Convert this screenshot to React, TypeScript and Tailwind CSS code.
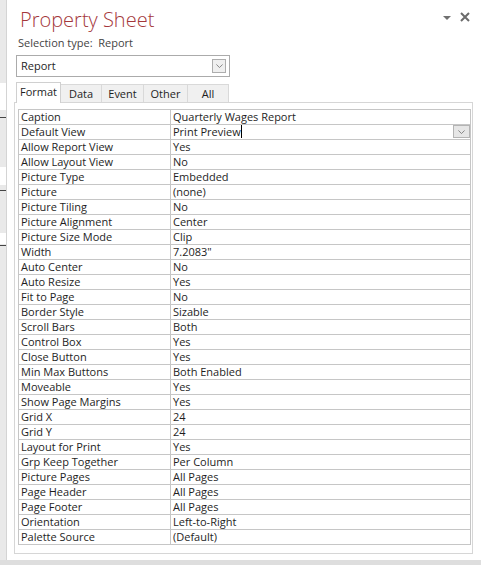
import React from "react";

const rows: [string, string][] = [
  ["Caption", "Quarterly Wages Report"],
  ["Default View", "Print Preview"],
  ["Allow Report View", "Yes"],
  ["Allow Layout View", "No"],
  ["Picture Type", "Embedded"],
  ["Picture", "(none)"],
  ["Picture Tiling", "No"],
  ["Picture Alignment", "Center"],
  ["Picture Size Mode", "Clip"],
  ["Width", "7.2083\""],
  ["Auto Center", "No"],
  ["Auto Resize", "Yes"],
  ["Fit to Page", "No"],
  ["Border Style", "Sizable"],
  ["Scroll Bars", "Both"],
  ["Control Box", "Yes"],
  ["Close Button", "Yes"],
  ["Min Max Buttons", "Both Enabled"],
  ["Moveable", "Yes"],
  ["Show Page Margins", "Yes"],
  ["Grid X", "24"],
  ["Grid Y", "24"],
  ["Layout for Print", "Yes"],
  ["Grp Keep Together", "Per Column"],
  ["Picture Pages", "All Pages"],
  ["Page Header", "All Pages"],
  ["Page Footer", "All Pages"],
  ["Orientation", "Left-to-Right"],
  ["Palette Source", "(Default)"],
];

const Chevron = ({ w = 9, h = 5 }: { w?: number; h?: number }) => (
  <svg width={w} height={h} viewBox="0 0 9 5">
    <path d="M0.5 0.5 L4.5 4.5 L8.5 0.5" fill="none" stroke="#6a6a6a" strokeWidth="1" />
  </svg>
);

export default function App() {
  const font = { fontFamily: '"Open Sans", "Noto Sans", sans-serif' };
  return (
    <div className="w-[481px] h-[565px] flex flex-col bg-white overflow-hidden" style={font}>
      <div className="flex h-[560px]">
        {/* underlying window strip */}
        <div className="w-[7px] flex flex-col bg-[#e9e9e9] border-r border-[#d4d4d4]">
          <div className="h-[83px]" />
          <div className="h-[27px] bg-white" />
          <div className="h-[7px]" />
          <div className="h-[1px] bg-[#444]" />
          <div className="h-[49px]" />
          <div className="h-[18px] bg-white" />
          <div className="h-[5px]" />
          <div className="h-[1px] bg-[#444]" />
          <div className="h-[42px]" />
          <div className="h-[11px] bg-white" />
          <div className="h-[1px]" />
          <div className="h-[1px] bg-[#444]" />
        </div>
        <div className="flex-1 flex flex-col bg-white">
          <div className="flex justify-between h-[34px]">
            <div className="ml-[13px] mt-[6px] text-[20px] leading-[28px] font-light text-[#a4373a]">
              Property Sheet
            </div>
            <div className="flex items-start gap-[9px] pr-[11px] mt-[12px]">
              <svg width="8" height="4" viewBox="0 0 8 4" className="mt-[4px]">
                <path d="M0 0 H8 L4 4 Z" fill="#707070" />
              </svg>
              <svg width="10" height="10" viewBox="0 0 10 10">
                <path d="M1 1 L9 9 M9 1 L1 9" stroke="#6b6b6b" strokeWidth="2" />
              </svg>
            </div>
          </div>
          <div className="ml-[11px] h-[17px] leading-[17px] text-[11px] text-[#444]">
            Selection type:&nbsp;&nbsp;Report
          </div>
          <div className="ml-[9px] mt-[4px] w-[214px] h-[22px] border border-[#ababab] flex items-center justify-between pl-[4px] pr-[3px] text-[11px] text-[#1e1e1e]">
            <span>Report</span>
            <div className="w-[14px] h-[14px] border border-[#adadad] bg-[#efefef] flex items-center justify-center">
              <Chevron w={7} h={4} />
            </div>
          </div>
          <div className="ml-[9px] mt-[5px] h-[20px] flex items-end text-[11px] text-[#1e1e1e]">
            <div className="w-[45px] h-[21px] mb-[-1px] relative z-10 bg-white border border-b-0 border-[#d0d0d0] flex items-center justify-center pb-[1px]">
              Format
            </div>
            {[
              ["Data", 41],
              ["Event", 42],
              ["Other", 44],
              ["All", 41],
            ].map(([t, w]) => (
              <div
                key={t as string}
                className="h-[18px] bg-[#f0f0f0] border-t border-r border-[#d9d9d9] flex items-center justify-center pt-[1px]"
                style={{ width: w as number }}
              >
                {t}
              </div>
            ))}
          </div>
          <div className="ml-[7px] w-[459px] h-[452px] border border-[#d6d6d6] pt-[6px] pl-[3px]">
            <div className="w-[453px] border-t border-l border-r border-[#c6c6c6] text-[11px] leading-[14px] text-[#1e1e1e]">
              {rows.map(([k, v], i) => (
                <div key={k} className="flex h-[15px] border-b border-[#c6c6c6]">
                  <div className="w-[152px] border-r border-[#c6c6c6] pl-[2px] whitespace-nowrap">{k}</div>
                  <div className="flex-1 pl-[2px] whitespace-nowrap flex justify-between">
                    {i === 1 ? (
                      <>
                        <span className="flex items-start">
                          {v}
                          <span className="inline-block w-[1px] h-[13px] bg-black" />
                        </span>
                        <div className="w-[17px] h-[13px] border border-[#b4b4b4] bg-[#e6e6e6] flex items-center justify-center">
                          <Chevron w={7} h={4} />
                        </div>
                      </>
                    ) : (
                      <span>{v}</span>
                    )}
                  </div>
                </div>
              ))}
            </div>
          </div>
        </div>
      </div>
      <div className="h-[5px] bg-[#dedede]" />
    </div>
  );
}
